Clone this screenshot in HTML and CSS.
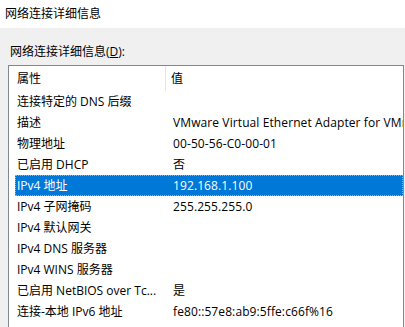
FILE: index.html
```html
<!DOCTYPE html>
<html lang="zh-CN">
<head>
    <meta charset="UTF-8">
    <title>网络连接详细信息</title>
    <link rel="stylesheet" href="styles.css">
</head>
<body>
    <div class="titlebar">网络连接详细信息</div>
    <div class="dialog">
        <div class="label">网络连接详细信息(<u>D</u>):</div>
        <div class="listbox">
            <div class="header">
                <div class="col-name">属性</div>
                <div class="col-value">值</div>
            </div>
            <div class="row"><div class="col-name">连接特定的 DNS 后缀</div><div class="col-value"></div></div>
            <div class="row"><div class="col-name">描述</div><div class="col-value">VMware Virtual Ethernet Adapter for VMnet1</div></div>
            <div class="row"><div class="col-name">物理地址</div><div class="col-value">00-50-56-C0-00-01</div></div>
            <div class="row"><div class="col-name">已启用 DHCP</div><div class="col-value">否</div></div>
            <div class="row selected"><div class="col-name">IPv4 地址</div><div class="col-value">192.168.1.100</div></div>
            <div class="row"><div class="col-name">IPv4 子网掩码</div><div class="col-value">255.255.255.0</div></div>
            <div class="row"><div class="col-name">IPv4 默认网关</div><div class="col-value"></div></div>
            <div class="row"><div class="col-name">IPv4 DNS 服务器</div><div class="col-value"></div></div>
            <div class="row"><div class="col-name">IPv4 WINS 服务器</div><div class="col-value"></div></div>
            <div class="row"><div class="col-name">已启用 NetBIOS over Tc...</div><div class="col-value">是</div></div>
            <div class="row"><div class="col-name">连接-本地 IPv6 地址</div><div class="col-value">fe80::57e8:ab9:5ffe:c66f%16</div></div>
        </div>
    </div>
</body>
</html>
```

FILE: styles.css
```css
/* Windows style details dialog */
body {
    margin: 0;
    font-family: "Open Sans", "Noto Sans CJK SC", sans-serif;
    font-size: 12px;
    color: #000;
    background-color: #f0f0f0;
    overflow: hidden;
}
.titlebar {
    height: 28px;
    line-height: 28px;
    padding-left: 5px;
    background: white;
}
.dialog {
    padding: 14px 0 0 8px;
}
.label {
    height: 23px;
    padding-left: 2px;
    line-height: 20px;
}
.listbox {
    border: 1px solid #828790;
    width: 394px;
    height: 300px;
    background: white;
    overflow: hidden;
}
.header {
    display: flex;
    height: 25px;
    line-height: 25px;
    margin-left: 6px;
}
.header .col-name {
    border-right: 1px solid #e5e5e5;
    width: 148px;
}
.header .col-value {
    padding-left: 5px;
}
.row {
    display: flex;
    height: 21px;
    line-height: 21px;
    margin-left: 6px;
    white-space: nowrap;
}
.col-name {
    width: 149px;
    padding-left: 2px;
    flex-shrink: 0;
    overflow: hidden;
    white-space: nowrap;
}
.col-value {
    padding-left: 7px;
    white-space: nowrap;
    letter-spacing: 0.1px;
}
.selected {
    background-color: #0078d7;
    color: white;
    outline: 1px dotted #f0a040;
    outline-offset: -1px;
}
```
